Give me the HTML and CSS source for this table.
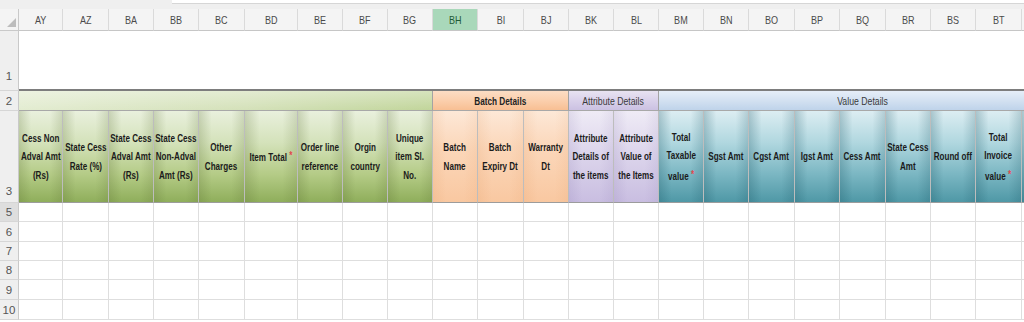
FILE: index.html
```html
<!DOCTYPE html>
<html>
<head>
<meta charset="utf-8">
<link rel="stylesheet" href="styles.css">
</head>
<body>
<div class="topbar"><div class="fx"></div></div>
<div class="sheet">
  <!-- column headers -->
  <div class="corner"></div>
  <div class="ch"><span>AY</span></div>
  <div class="ch"><span>AZ</span></div>
  <div class="ch"><span>BA</span></div>
  <div class="ch"><span>BB</span></div>
  <div class="ch"><span>BC</span></div>
  <div class="ch"><span>BD</span></div>
  <div class="ch"><span>BE</span></div>
  <div class="ch"><span>BF</span></div>
  <div class="ch"><span>BG</span></div>
  <div class="ch sel"><span>BH</span></div>
  <div class="ch"><span>BI</span></div>
  <div class="ch"><span>BJ</span></div>
  <div class="ch"><span>BK</span></div>
  <div class="ch"><span>BL</span></div>
  <div class="ch"><span>BM</span></div>
  <div class="ch"><span>BN</span></div>
  <div class="ch"><span>BO</span></div>
  <div class="ch"><span>BP</span></div>
  <div class="ch"><span>BQ</span></div>
  <div class="ch"><span>BR</span></div>
  <div class="ch"><span>BS</span></div>
  <div class="ch"><span>BT</span></div>
  <div class="ch"></div>

  <!-- row 1 -->
  <div class="rn r1n">1</div>
  <div class="r1"></div>

  <!-- row 2 -->
  <div class="rn">2</div>
  <div class="grp g2"></div>
  <div class="grp o2"><span class="t b">Batch Details</span></div>
  <div class="grp p2"><span class="t r">Attribute Details</span></div>
  <div class="grp b2"><span class="t r">Value Details</span></div>

  <!-- row 3 -->
  <div class="rn r3n">3</div>
  <div class="h hg"><span class="t">Cess Non<br>Adval Amt<br>(Rs)</span></div>
  <div class="h hg"><span class="t">State Cess<br>Rate (%)</span></div>
  <div class="h hg"><span class="t">State Cess<br>Adval Amt<br>(Rs)</span></div>
  <div class="h hg"><span class="t">State Cess<br>Non-Adval<br>Amt (Rs)</span></div>
  <div class="h hg"><span class="t">Other<br>Charges</span></div>
  <div class="h hg"><span class="t">Item Total <i class="req">*</i></span></div>
  <div class="h hg"><span class="t">Order line<br>reference</span></div>
  <div class="h hg"><span class="t">Orgin<br>country</span></div>
  <div class="h hg"><span class="t">Unique<br>item Sl.<br>No.</span></div>
  <div class="h ho"><span class="t">Batch<br>Name</span></div>
  <div class="h ho"><span class="t">Batch<br>Expiry Dt</span></div>
  <div class="h ho"><span class="t">Warranty<br>Dt</span></div>
  <div class="h hp"><span class="t">Attribute<br>Details of<br>the items</span></div>
  <div class="h hp"><span class="t">Attribute<br>Value of<br>the Items</span></div>
  <div class="h ht"><span class="t">Total<br>Taxable<br>value <i class="req">*</i></span></div>
  <div class="h ht"><span class="t">Sgst Amt</span></div>
  <div class="h ht"><span class="t">Cgst Amt</span></div>
  <div class="h ht"><span class="t">Igst Amt</span></div>
  <div class="h ht"><span class="t">Cess Amt</span></div>
  <div class="h ht"><span class="t">State Cess<br>Amt</span></div>
  <div class="h ht"><span class="t">Round off</span></div>
  <div class="h ht"><span class="t">Total<br>Invoice<br>value <i class="req">*</i></span></div>
  <div class="h ht"></div>

  <!-- row 5 -->
  <div class="rn sel">5</div>
  <div class="c"></div><div class="c"></div><div class="c"></div><div class="c"></div><div class="c"></div><div class="c"></div><div class="c"></div><div class="c"></div><div class="c"></div><div class="c"></div><div class="c"></div><div class="c"></div><div class="c"></div><div class="c"></div><div class="c"></div><div class="c"></div><div class="c"></div><div class="c"></div><div class="c"></div><div class="c"></div><div class="c"></div><div class="c"></div><div class="c"></div>
  <!-- row 6 -->
  <div class="rn">6</div>
  <div class="c"></div><div class="c"></div><div class="c"></div><div class="c"></div><div class="c"></div><div class="c"></div><div class="c"></div><div class="c"></div><div class="c"></div><div class="c"></div><div class="c"></div><div class="c"></div><div class="c"></div><div class="c"></div><div class="c"></div><div class="c"></div><div class="c"></div><div class="c"></div><div class="c"></div><div class="c"></div><div class="c"></div><div class="c"></div><div class="c"></div>
  <!-- row 7 -->
  <div class="rn">7</div>
  <div class="c"></div><div class="c"></div><div class="c"></div><div class="c"></div><div class="c"></div><div class="c"></div><div class="c"></div><div class="c"></div><div class="c"></div><div class="c"></div><div class="c"></div><div class="c"></div><div class="c"></div><div class="c"></div><div class="c"></div><div class="c"></div><div class="c"></div><div class="c"></div><div class="c"></div><div class="c"></div><div class="c"></div><div class="c"></div><div class="c"></div>
  <!-- row 8 -->
  <div class="rn">8</div>
  <div class="c"></div><div class="c"></div><div class="c"></div><div class="c"></div><div class="c"></div><div class="c"></div><div class="c"></div><div class="c"></div><div class="c"></div><div class="c"></div><div class="c"></div><div class="c"></div><div class="c"></div><div class="c"></div><div class="c"></div><div class="c"></div><div class="c"></div><div class="c"></div><div class="c"></div><div class="c"></div><div class="c"></div><div class="c"></div><div class="c"></div>
  <!-- row 9 -->
  <div class="rn">9</div>
  <div class="c"></div><div class="c"></div><div class="c"></div><div class="c"></div><div class="c"></div><div class="c"></div><div class="c"></div><div class="c"></div><div class="c"></div><div class="c"></div><div class="c"></div><div class="c"></div><div class="c"></div><div class="c"></div><div class="c"></div><div class="c"></div><div class="c"></div><div class="c"></div><div class="c"></div><div class="c"></div><div class="c"></div><div class="c"></div><div class="c"></div>
  <!-- row 10 -->
  <div class="rn">10</div>
  <div class="c"></div><div class="c"></div><div class="c"></div><div class="c"></div><div class="c"></div><div class="c"></div><div class="c"></div><div class="c"></div><div class="c"></div><div class="c"></div><div class="c"></div><div class="c"></div><div class="c"></div><div class="c"></div><div class="c"></div><div class="c"></div><div class="c"></div><div class="c"></div><div class="c"></div><div class="c"></div><div class="c"></div><div class="c"></div><div class="c"></div>
</div>
</body>
</html>
```

FILE: styles.css
```css
* { box-sizing: border-box; }

html, body {
  margin: 0;
  background: #ffffff;
  overflow: hidden;
}

body {
  width: 1024px;
  height: 322px;
  font-family: "Liberation Sans", Arial, sans-serif;
}

.topbar {
  height: 9px;
  background: #efefef;
  display: flex;
}

.topbar .fx {
  margin-left: 172px;
  flex: 1;
  height: 4px;
  background: #ffffff;
  border-bottom: 1px solid #d6d6d6;
}

.sheet {
  display: grid;
  width: max-content;
  grid-template-columns: 19px 44px 46px 45px 45px 46px 53px 45px 45px 45px 45px 46px 45px 45px 45px 45px 45px 46px 45px 46px 45px 45px 46px 45px;
  grid-template-rows: 22px 60px 20px 92px 19px 20px 19px 19px 20px 20px;
}

/* column headers */
.corner {
  background: #f4f4f4;
  border-right: 1px solid #c9c9c9;
  border-bottom: 1px solid #c9c9c9;
  display: flex;
  align-items: flex-end;
  justify-content: flex-end;
  padding: 0 2px 3px 0;
}

.corner::after {
  content: "";
  width: 0;
  height: 0;
  border-left: 9px solid transparent;
  border-bottom: 9px solid #bdbdbd;
}

.ch {
  background: #f4f4f4;
  border-right: 1px solid #dadada;
  border-bottom: 1px solid #c6c6c6;
  display: flex;
  align-items: center;
  justify-content: center;
  font-size: 10.5px;
  color: #4a4a4a;
}

.ch span {
  display: inline-block;
  transform: scaleX(0.86);
}

.ch.sel {
  background: #a9d8ba;
  color: #1f5a36;
}

/* row numbers */
.rn {
  background: #efefef;
  border-right: 1px solid #c9c9c9;
  border-bottom: 1px solid #d6d6d6;
  display: flex;
  align-items: center;
  justify-content: center;
  font-size: 11.5px;
  color: #555555;
}

.rn.r1n {
  align-items: flex-end;
  padding-bottom: 8px;
}

.rn.r3n {
  align-items: flex-end;
  padding-bottom: 5px;
}

.rn.sel {
  background: #dedede;
}

/* row 1 */
.r1 {
  grid-column: span 23;
  border-bottom: 2px solid #7d7d7d;
}

/* row 2 group headers */
.grp {
  display: flex;
  align-items: center;
  justify-content: center;
  border-right: 1px solid #a3a3a3;
  border-bottom: 1px solid #a8a8a8;
  font-size: 10.5px;
  color: #222222;
}

.g2 {
  grid-column: span 9;
  background:
    linear-gradient(180deg, rgba(255,255,255,0.35), rgba(255,255,255,0)),
    linear-gradient(90deg, #e3ecd1 0%, #d4e1b9 55%, #c1d59a 100%);
}

.o2 {
  grid-column: span 3;
  background: linear-gradient(180deg, #fcddc4 0%, #fbcfad 50%, #f8bf93 100%);
}

.p2 {
  grid-column: span 2;
  background: linear-gradient(180deg, #e8e3f1 0%, #d9d1ea 50%, #cbc1e2 100%);
}

.b2 {
  grid-column: span 9;
  background: linear-gradient(180deg, #e6eef8 0%, #d3e1f1 50%, #bfd3ea 100%);
}

.t {
  display: inline-block;
  white-space: nowrap;
  text-align: center;
}

.grp .t.b {
  font-weight: bold;
  transform: scaleX(0.78);
}

.grp .t.r {
  color: #3a3a3a;
  transform: scaleX(0.83);
}

/* row 3 field headers */
.h {
  display: flex;
  align-items: center;
  justify-content: center;
  border-right: 1px solid #bdbdbd;
  border-bottom: 1px solid #9c9c9c;
  font-size: 10.5px;
  font-weight: bold;
  color: #1b1b1b;
  line-height: 18.5px;
}

.h .t {
  transform: scaleX(0.77);
}

.req {
  font-style: normal;
  color: #e2464c;
  vertical-align: 2px;
}

.hg {
  background:
    linear-gradient(90deg, rgba(85,105,45,0.22) 0%, rgba(85,105,45,0) 28%, rgba(85,105,45,0) 72%, rgba(85,105,45,0.18) 100%),
    linear-gradient(180deg, #e9f0dd 0%, #d4e2ba 35%, #b4cb86 70%, #8fae5b 100%);
}

.ho {
  background:
    linear-gradient(90deg, rgba(210,120,50,0.10) 0%, rgba(210,120,50,0) 30%, rgba(210,120,50,0) 70%, rgba(210,120,50,0.08) 100%),
    linear-gradient(180deg, #fde8d7 0%, #fbd7ba 40%, #f9c8a1 100%);
}

.hp {
  background:
    linear-gradient(90deg, rgba(90,70,140,0.10) 0%, rgba(90,70,140,0) 30%, rgba(90,70,140,0) 70%, rgba(90,70,140,0.08) 100%),
    linear-gradient(180deg, #efebf6 0%, #ddd6ec 45%, #c9bee1 100%);
}

.ht {
  background:
    linear-gradient(90deg, rgba(20,80,95,0.25) 0%, rgba(20,80,95,0) 28%, rgba(20,80,95,0) 72%, rgba(20,80,95,0.2) 100%),
    linear-gradient(180deg, #dcedf2 0%, #b0d7df 35%, #7ab6c2 70%, #4f98a6 100%);
}

/* data cells */
.c {
  border-right: 1px solid #dedede;
  border-bottom: 1px solid #dedede;
}
```
